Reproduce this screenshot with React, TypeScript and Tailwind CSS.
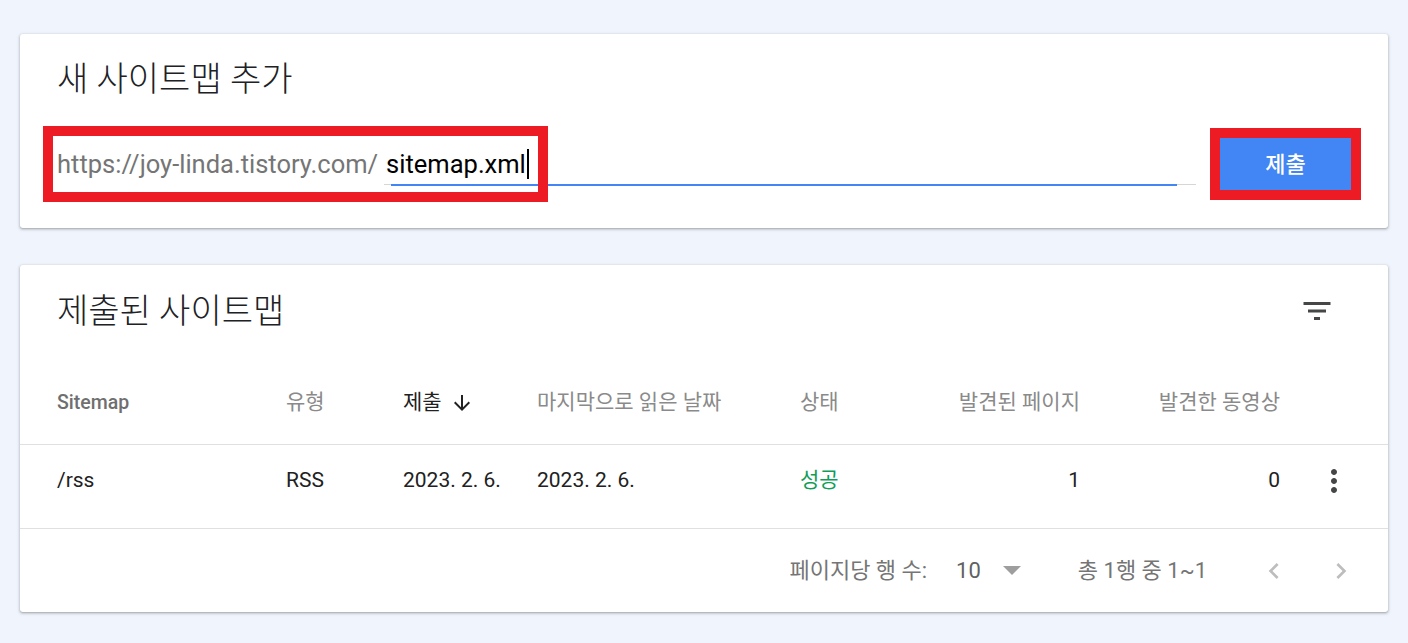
const font = { fontFamily: 'Roboto, "Noto Sans CJK KR", sans-serif' };

function FilterIcon() {
  return (
    <svg width="36" height="36" viewBox="0 0 24 24" fill="#444746">
      <path d="M10 18h4v-2h-4v2zM3 6v2h18V6H3zm3 7h12v-2H6v2z" />
    </svg>
  );
}

function MoreIcon() {
  return (
    <svg width="36" height="36" viewBox="0 0 24 24" fill="#444746">
      <path d="M12 8c1.1 0 2-.9 2-2s-.9-2-2-2-2 .9-2 2 .9 2 2 2zm0 2c-1.1 0-2 .9-2 2s.9 2 2 2 2-.9 2-2-.9-2-2-2zm0 6c-1.1 0-2 .9-2 2s.9 2 2 2 2-.9 2-2-.9-2-2-2z" />
    </svg>
  );
}

function ArrowDown() {
  return (
    <svg width="24" height="24" viewBox="0 0 24 24" fill="#212121">
      <path d="M20 12l-1.41-1.41L13 16.17V4h-2v12.17l-5.58-5.59L4 12l8 8 8-8z" />
    </svg>
  );
}

function Chevron({ dir }: { dir: 'left' | 'right' }) {
  return (
    <svg width="32" height="32" viewBox="0 0 24 24" fill="#bdbdbd">
      {dir === 'left' ? (
        <path d="M15.41 7.41L14 6l-6 6 6 6 1.41-1.41L10.83 12z" />
      ) : (
        <path d="M10 6L8.59 7.41 13.17 12l-4.58 4.59L10 18l6-6z" />
      )}
    </svg>
  );
}

const cols = 'grid grid-cols-[229px_117px_134px_263px_120px_160px_200px_1fr] items-center px-[37px]';

export default function App() {
  return (
    <div className="min-h-screen bg-[#f0f4fc] px-[20px] pt-[34px] pb-[30px]" style={font}>
      {/* add sitemap */}
      <div className="bg-white rounded-[3px] shadow-[0_1px_2px_rgba(60,64,67,0.3),0_1px_3px_1px_rgba(60,64,67,0.15)] pt-[25px] pb-[26px]">
        <h2 className="px-[37px] text-[34px] leading-[40px] font-light text-[#202124]">새 사이트맵 추가</h2>
        <div className="relative mt-[27px] h-[76px] flex items-center px-[37px]">
          <span className="text-[25.5px] text-[#757575] whitespace-nowrap">https://joy-linda.tistory.com/</span>
          <div className="relative ml-[6px] flex-1 self-stretch flex items-center">
            <span className="pl-[2px] text-[25.5px] text-black">sitemap.xml</span>
            <span className="ml-[1px] w-[2px] h-[30px] bg-black"></span>
            <div className="absolute left-0 right-0 bottom-[17px] h-px bg-[#d6d6d6]"></div>
            <div className="absolute left-[7px] right-[19px] bottom-[16px] h-[2px] bg-[#4285f4]"></div>
          </div>
          <button className="ml-[24px] w-[131px] h-[52px] rounded-none bg-[#4285f4] text-white text-[22px] font-medium outline-solid outline-[10px] outline-[#ed1c24]">
            제출
          </button>
          <div className="absolute left-[23px] top-0 w-[505px] h-[76px] border-[10px] border-[#ed1c24]"></div>
        </div>
      </div>

      {/* submitted sitemaps */}
      <div className="mt-[37px] bg-white rounded-[3px] shadow-[0_1px_2px_rgba(60,64,67,0.3),0_1px_3px_1px_rgba(60,64,67,0.15)]">
        <div className="h-[96px] flex items-start justify-between pt-[26px] pl-[37px] pr-[53px]">
          <h2 className="text-[34px] leading-[40px] font-light text-[#202124]">제출된 사이트맵</h2>
          <div className="h-[40px] flex items-center">
            <FilterIcon />
          </div>
        </div>

        <div className={`${cols} h-[84px] border-b border-[#e0e0e0] text-[21px] text-[#8a8a8a]`}>
          <span className="text-[19.5px] font-medium text-[#6f6f6f]">Sitemap</span>
          <span>유형</span>
          <span className="flex items-center gap-[8px] text-[#212121]">
            제출 <ArrowDown />
          </span>
          <span>마지막으로 읽은 날짜</span>
          <span>상태</span>
          <span className="text-right">발견된 페이지</span>
          <span className="text-right">발견한 동영상</span>
          <span></span>
        </div>

        <div className={`${cols} h-[84px] pb-[12px] border-b border-[#e0e0e0] text-[21px] text-[#212121]`}>
          <span>/rss</span>
          <span>RSS</span>
          <span>2023. 2. 6.</span>
          <span>2023. 2. 6.</span>
          <span className="text-[#0f9d58]">성공</span>
          <span className="text-right">1</span>
          <span className="text-right">0</span>
          <span className="flex justify-end -mr-[1px]">
            <MoreIcon />
          </span>
        </div>

        <div className="h-[83px] flex items-center justify-end pr-[31px] text-[22px] text-[#757575]">
          <span>페이지당 행 수:</span>
          <span className="ml-[29px] text-[#616161]">10</span>
          <svg className="ml-[22px]" width="18" height="9" viewBox="0 0 18 9">
            <polygon points="0,0 18,0 9,9" fill="#9e9e9e" />
          </svg>
          <span className="ml-[57px]">총 1행 중 1~1</span>
          <span className="ml-[51px] flex">
            <Chevron dir="left" />
          </span>
          <span className="ml-[35px] flex">
            <Chevron dir="right" />
          </span>
        </div>
      </div>
    </div>
  );
}
